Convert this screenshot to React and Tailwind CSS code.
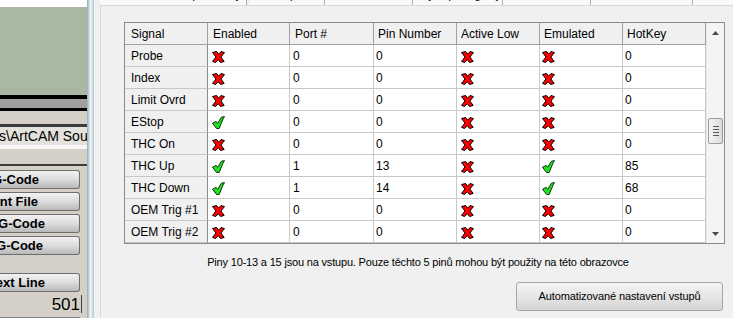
import React from 'react';

const rows = [
  { name: 'Probe', en: false, port: '0', pin: '0', low: false, emu: false, key: '0' },
  { name: 'Index', en: false, port: '0', pin: '0', low: false, emu: false, key: '0' },
  { name: 'Limit Ovrd', en: false, port: '0', pin: '0', low: false, emu: false, key: '0' },
  { name: 'EStop', en: true, port: '0', pin: '0', low: false, emu: false, key: '0' },
  { name: 'THC On', en: false, port: '0', pin: '0', low: false, emu: false, key: '0' },
  { name: 'THC Up', en: true, port: '1', pin: '13', low: false, emu: true, key: '85' },
  { name: 'THC Down', en: true, port: '1', pin: '14', low: false, emu: true, key: '68' },
  { name: 'OEM Trig #1', en: false, port: '0', pin: '0', low: false, emu: false, key: '0' },
  { name: 'OEM Trig #2', en: false, port: '0', pin: '0', low: false, emu: false, key: '0' },
];

function RedX() {
  return (
    <svg width="13" height="12" viewBox="0 0 13 12">
      <path
        d="M0.5 1.5 L4.6 0.5 L6.6 3.2 L9 0.5 L12.5 1.6 L8.9 6 L12.2 10.4 L8.6 11.5 L6.3 8.7 L3.6 11.5 L0.5 10.4 L4 6 Z"
        fill="#ff0000"
        stroke="#000"
        strokeWidth="1"
        strokeLinejoin="miter"
      />
    </svg>
  );
}

function GreenCheck() {
  return (
    <svg width="13" height="13" viewBox="0 0 13 13">
      <path
        d="M0.5 7.2 L4.2 5.4 L5.6 7.4 L9.4 1.2 L12.5 0.6 L11 3 L7.2 12.5 L4.6 12.5 Z"
        fill="#22e022"
        stroke="#0a330a"
        strokeWidth="1"
        strokeLinejoin="miter"
      />
    </svg>
  );
}

function Flag({ on, pad }) {
  return <div className={'flex items-start pt-[2px] ' + pad}>{on ? <GreenCheck /> : <RedX />}</div>;
}

function LeftButton({ label, pr }) {
  return (
    <div
      className={
        'h-[19px] w-[80px] flex items-center justify-end rounded-r-[3px] border border-l-0 border-[#6e6e6e] bg-gradient-to-b from-[#f2f2f2] via-[#dcdcdc] to-[#b9b9b9] text-[13px] font-bold leading-none text-black whitespace-nowrap ' +
        pr
      }
    >
      {label}
    </div>
  );
}

export default function App() {
  const cell = 'h-[22px] border-r border-b border-[#c8c8c8] flex items-center text-[12px] text-black';
  const head = 'h-[22px] border-r border-b border-[#a0a0a0] bg-[#f0f0f0] flex items-center pl-[4px] text-[12px] text-black';
  const cols = 'grid grid-cols-[83px_82px_84px_83px_83px_83px_83px]';

  return (
    <div className="w-[733px] h-[318px] overflow-hidden flex bg-[#f0f0f0]" style={{ fontFamily: '"Liberation Sans", Arial, sans-serif' }}>
      {/* left Mach3 panel */}
      <div className="w-[87px] shrink-0 flex flex-col overflow-hidden">
        <div className="h-[7px] bg-white" />
        <div className="h-[90px] bg-[#a9b8a2]" />
        <div className="h-[4px] bg-black" />
        <div className="h-[9px] bg-[#a0a0a0]" />
        <div className="h-[3px] bg-black" />
        <div className="h-[14px] bg-[#d4d0c8]" />
        <div className="h-[3px] bg-[#3c3c3c]" />
        <div className="h-[18px] bg-[#e4e2dc] flex items-center text-[14px] text-black whitespace-nowrap -ml-[1px]">s\ArtCAM Sou</div>
        <div className="h-[4px] bg-[#f6f6f6]" />
        <div className="h-[15px] bg-[#d4d0c8]" />
        <div className="h-[2px] bg-[#3c3c3c]" />
        <div className="flex-1 bg-[#d4d0c8] flex flex-col pt-[4px] gap-[3px]">
          <LeftButton label="Edit G-Code" pr="pr-[40px]" />
          <LeftButton label="Recent File" pr="pr-[41px]" />
          <LeftButton label="Close G-Code" pr="pr-[34px]" />
          <LeftButton label="Load G-Code" pr="pr-[36px]" />
          <div className="h-[12px]" />
          <LeftButton label="Set Next Line" pr="pr-[34px]" />
          <div className="h-[18px] w-[82px] flex items-center justify-end border-r border-[#404040] text-[17px] leading-none text-black pr-[1px]">501</div>
          <div className="h-[1px] w-[80px] bg-[#808080] mt-[1px]" />
        </div>
      </div>

      {/* splitter */}
      <div className="w-[7px] shrink-0 bg-gradient-to-r from-[#9aa9b2] via-[#eef7fb] to-[#b4c4cc]" />

      {/* dialog area */}
      <div className="flex-1 pl-[6px] flex flex-col">
        {/* tab headers (cut off) */}
        <div className="h-[5px] flex overflow-hidden text-[11px] leading-[11px] text-black">
          <div className="w-[147px] bg-[#f9f9f9] border-r border-[#b0b0b0] pl-[40px] -mt-[10px] whitespace-nowrap">Nastavení portů a výběr os</div>
          <div className="w-[3px]" />
          <div className="w-[75px] bg-[#f9f9f9] border-r border-[#b0b0b0] pl-[40px] -mt-[10px] whitespace-nowrap">pro</div>
          <div className="w-[88px] bg-[#f9f9f9] border-r border-[#b0b0b0]" />
          <div className="w-[90px] bg-[#f9f9f9] border-r border-[#b0b0b0] pl-[8px] -mt-[10px] whitespace-nowrap">Výstupní signály</div>
          <div className="w-[88px] bg-[#f9f9f9] border-r border-[#b0b0b0]" />
          <div className="w-[102px] bg-[#f9f9f9] border-r border-[#b0b0b0]" />
          <div className="flex-1 bg-[#f9f9f9]" />
        </div>

        {/* tab page */}
        <div className="flex-1 border-l border-t border-[#d9d9d9] bg-[#f0f0f0] pl-[23px] pt-[16px]">
          <div className="w-[601px] border border-[#8a8a8a] flex bg-white">
            <div className="flex flex-col">
              <div className={cols}>
                <div className={head + ' pl-[6px]'}>Signal</div>
                <div className={head + ' pl-[5px]'}>Enabled</div>
                <div className={head + ' pl-[5px]'}>Port #</div>
                <div className={head + ' pl-[3px]'}>Pin Number</div>
                <div className={head}>Active Low</div>
                <div className={head + ' pl-[3px]'}>Emulated</div>
                <div className={head}>HotKey</div>
              </div>
              {rows.map((r) => (
                <div key={r.name} className={cols}>
                  <div className={cell + ' bg-[#f0f0f0] border-r-[#8c8c8c] pl-[6px]'}>{r.name}</div>
                  <div className={cell}><Flag on={r.en} pad="pl-[4px]" /></div>
                  <div className={cell + ' pl-[3px]'}>{r.port}</div>
                  <div className={cell + ' pl-[2px]'}>{r.pin}</div>
                  <div className={cell}><Flag on={r.low} pad="pl-[4px]" /></div>
                  <div className={cell}><Flag on={r.emu} pad="pl-[2px]" /></div>
                  <div className={cell + ' pl-[2px]'}>{r.key}</div>
                </div>
              ))}
            </div>

            {/* scrollbar */}
            <div className="w-[18px] bg-[#f4f4f4] border-l border-[#e8e8e8] flex flex-col items-center">
              <div className="h-[17px] flex items-center justify-center pt-[2px]">
                <svg width="7" height="4" viewBox="0 0 7 4"><path d="M0 4 L3.5 0 L7 4 Z" fill="#4a4a4a" /></svg>
              </div>
              <div className="h-[78px]" />
              <div className="w-[15px] h-[26px] rounded-[2px] border border-[#9a9a9a] bg-gradient-to-r from-[#f4f4f4] to-[#dcdcdc] flex flex-col items-center justify-center gap-[2px]">
                <div className="w-[6px] h-[1px] bg-[#5a5a5a]" />
                <div className="w-[6px] h-[1px] bg-[#5a5a5a]" />
                <div className="w-[6px] h-[1px] bg-[#5a5a5a]" />
                <div className="w-[6px] h-[1px] bg-[#5a5a5a]" />
              </div>
              <div className="flex-1" />
              <div className="h-[17px] flex items-center justify-center pb-[2px]">
                <svg width="7" height="4" viewBox="0 0 7 4"><path d="M0 0 L7 0 L3.5 4 Z" fill="#4a4a4a" /></svg>
              </div>
            </div>
          </div>

          <div className="w-[588px] mt-[11px] text-center text-[11px] tracking-[-0.18px] leading-[14px] text-black whitespace-nowrap">
            Piny 10-13 a 15 jsou na vstupu. Pouze těchto 5 pinů mohou být použity na této obrazovce
          </div>

          <div className="w-[599px] flex justify-end mt-[13px]">
            <div className="w-[207px] h-[29px] rounded-[3px] border border-[#a6a6a6] bg-gradient-to-b from-[#f4f4f4] via-[#e6e6e6] to-[#d4d4d4] flex items-center justify-center text-[11px] tracking-[-0.1px] text-black">
              Automatizované nastavení vstupů
            </div>
          </div>
        </div>
      </div>
    </div>
  );
}
